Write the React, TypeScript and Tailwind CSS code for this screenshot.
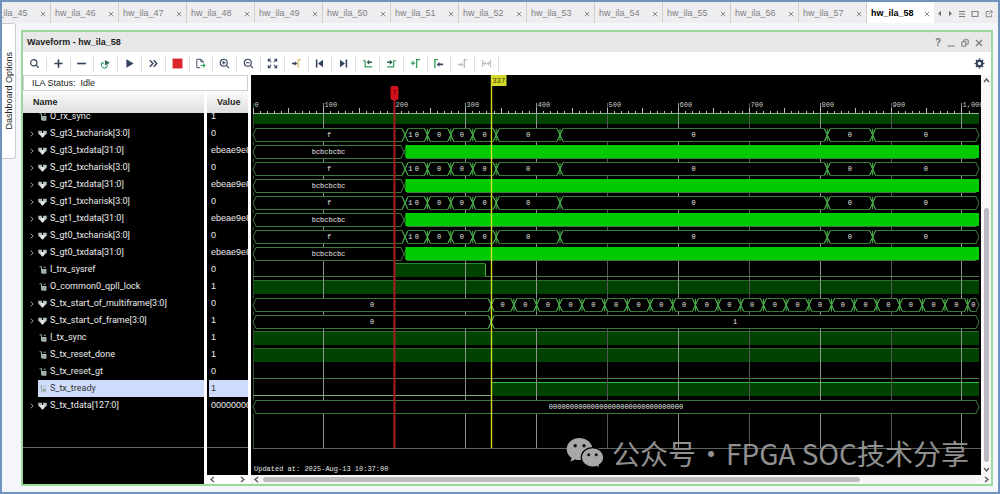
import React, { useLayoutEffect, useRef, useState } from 'react';

const NAVY = '#34435e';
const GREEN = '#2f9e5b';
const GREY = '#b9b9b9';

/* ---------- tab strip ---------- */

const tabNames = Array.from({ length: 14 }, (_, i) => `hw_ila_${45 + i}`);

function CloseGlyph() {
  return (
    <svg viewBox="0 0 6 6" className="size-[6px]" fill="none" stroke="#8a8a8a" strokeWidth="1">
      <path d="M.8 .8 5.2 5.2M5.2 .8 .8 5.2" />
    </svg>
  );
}

function TabStrip() {
  return (
    <header className="flex h-[21px] shrink-0 bg-[#eeeef1]">
      <div className="flex min-w-0 flex-1 justify-end overflow-hidden" role="tablist">
        {tabNames.map((name, i) => {
          const active = i === tabNames.length - 1;
          return (
            <div
              key={name}
              className={
                active
                  ? 'flex w-[68px] shrink-0 items-center justify-between border-l border-[#cfcfcf] bg-white pr-[4px] pl-[4px]'
                  : 'flex w-[68px] shrink-0 items-center justify-between border-l border-[#cfcfcf] pr-[4px] pl-[4px]'
              }
            >
              <button
                role="tab"
                aria-selected={active}
                className={active ? 'text-[9px] leading-[12px] font-bold text-black' : 'text-[9px] leading-[12px] text-[#808080]'}
              >
                {name}
              </button>
              <button aria-label={`Close ${name}`} className="pt-[2px]">
                <CloseGlyph />
              </button>
            </div>
          );
        })}
      </div>
      <div className="flex w-[64px] shrink-0 items-center justify-between pt-[2px] pr-[5px] pl-[3px]">
        <button aria-label="Previous tab">
          <svg viewBox="0 0 5 7" className="h-[7px] w-[5px]"><path d="M4 .8v5.4L1 3.5z" fill="#777" /></svg>
        </button>
        <button aria-label="Next tab">
          <svg viewBox="0 0 5 7" className="h-[7px] w-[5px]"><path d="M1 .8v5.4l3-2.7z" fill="#777" /></svg>
        </button>
        <button aria-label="Tab list">
          <svg viewBox="0 0 6 8" className="h-[8px] w-[6px]"><path d="M0 1.5h6M0 4h6M0 6.5h6" stroke="#777" /></svg>
        </button>
        <button aria-label="Maximize">
          <svg viewBox="0 0 8 8" className="size-[8px]"><path d="M1 1.5h6v5H1z" fill="none" stroke="#888" strokeWidth="1.2" /></svg>
        </button>
        <button aria-label="Float">
          <svg viewBox="0 0 8 8" className="size-[8px]" fill="none" stroke="#888"><path d="M4 1.5H1.2v5.3h5.4V4.2M4 4.2 7 1M4.8 1H7v2.2" /></svg>
        </button>
      </div>
    </header>
  );
}

/* ---------- toolbar ---------- */

const tools: { label: string; icon: React.ReactNode }[] = [
  { label: 'Search', icon: <g fill="none" stroke={NAVY} strokeWidth="1.3"><circle cx="5.2" cy="5.2" r="3.4" /><path d="m7.8 7.8 2.8 2.8" /></g> },
  { label: 'Add', icon: <path d="M6 1.5v9M1.5 6h9" stroke={NAVY} strokeWidth="1.8" /> },
  { label: 'Remove', icon: <path d="M1.2 6h9.6" stroke={NAVY} strokeWidth="1.8" /> },
  {
    label: 'Toggle auto re-trigger',
    icon: <g><path d="M2.6 5.2a3.3 3.3 0 1 0 5.6 2.4M1.3 6.3l1.5-1.5 1.5 1.3" fill="none" stroke={GREEN} strokeWidth="1.1" /><path d="m5.4 2.2 5.4 3.1-5.4 3.1z" fill="#2c6a5c" /></g>,
  },
  { label: 'Run trigger', icon: <path d="m2.6 1.4 8 4.6-8 4.600z" fill={NAVY} /> },
  { label: 'Run trigger immediate', icon: <path d="m2 2.4 3.4 3.6L2 9.6M6.2 2.4 9.6 6 6.2 9.6" fill="none" stroke={NAVY} strokeWidth="1.5" /> },
  { label: 'Stop trigger', icon: <path d="M.6 .6h10.8v10.8H.6z" fill="#d8242b" /> },
  {
    label: 'Export data',
    icon: <g fill="none"><path d="M9.2 4.8V3.9L6.6 1.4H2v9.2h3.8M6.4 1.6v2.6h2.8" stroke={NAVY} /><path d="M6.2 8.2h4.4M8.8 6.2l2 2-2 2" stroke={GREEN} strokeWidth="1.1" /></g>,
  },
  { label: 'Zoom in', icon: <g fill="none" stroke={NAVY} strokeWidth="1.2"><circle cx="5.2" cy="5.2" r="3.8" /><path d="m8 8 3 3M3.2 5.2h4M5.2 3.2v4" /></g> },
  { label: 'Zoom out', icon: <g fill="none" stroke={NAVY} strokeWidth="1.2"><circle cx="5.2" cy="5.2" r="3.8" /><path d="m8 8 3 3M3.2 5.2h4" /></g> },
  {
    label: 'Zoom fit',
    icon: <path d="M4.6 4.6 1.6 1.6M1.4 4V1.4H4M7.4 4.6l3-3M8 1.4h2.6V4M4.6 7.4l-3 3M1.4 8v2.6H4M7.4 7.4l3 3M8 10.6h2.6V8" fill="none" stroke={NAVY} strokeWidth="1.1" />,
  },
  {
    label: 'Go to cursor',
    icon: <g><path d="M1 6h3.6" stroke={NAVY} strokeWidth="1.8" /><path d="m4 3.6 3 2.4-3 2.4z" fill={NAVY} /><path d="M7.8 11V2H11" fill="none" stroke="#d9bd6a" strokeWidth="1.4" /></g>,
  },
  { label: 'Go to start', icon: <g fill={NAVY}><path d="M2 1.6h1.7v8.8H2z" /><path d="M9.8 1.8v8.4L4.4 6z" /></g> },
  { label: 'Go to end', icon: <g fill={NAVY}><path d="M8.3 1.6H10v8.8H8.3z" /><path d="M2.2 1.8v8.4L7.6 6z" /></g> },
  {
    label: 'Previous transition',
    icon: <g><path d="M1 3h2.4v6.6H11" fill="none" stroke={GREEN} strokeWidth="1.3" /><path d="M5 4.6 8 2v1.8h2.8v1.7H8v1.8z" fill="#24594d" /></g>,
  },
  {
    label: 'Next transition',
    icon: <g><path d="M1 9.6h7.4V3H11" fill="none" stroke={GREEN} strokeWidth="1.3" /><path d="M7.2 4.6 4.2 2v1.8H1.2v1.7h3v1.8z" fill="#24594d" /></g>,
  },
  { label: 'Add marker', icon: <g fill="none" stroke={GREEN}><path d="M1 5.6h4.4M3.2 3.4v4.4" strokeWidth="1.3" /><path d="M7.2 11V1.8H11" strokeWidth="1.5" /></g> },
  {
    label: 'Previous marker',
    icon: <g><path d="M2 11V1.8h3.4" fill="none" stroke={GREEN} strokeWidth="1.5" /><path d="m4 7 3-2.6v1.7h4v1.9H7v1.6z" fill={NAVY} /></g>,
  },
  {
    label: 'Next marker',
    icon: <g><path d="M8 11V1.8h3" fill="none" stroke={GREY} strokeWidth="1.4" /><path d="M7 7 4.4 4.8v1.4H1.2v1.7h3.2v1.3z" fill={GREY} /></g>,
  },
  { label: 'Swap cursors', icon: <path d="M1.5 1.8v8.4M10.5 1.8v8.4M2 6h2.4M7.6 6H10M3 3.8 5.2 6 3 8.2M9 3.8 6.8 6 9 8.2" fill="none" stroke={GREY} strokeWidth="1.1" /> },
];

function Toolbar() {
  return (
    <div className="flex h-[23px] items-center justify-between bg-white pr-[6px]">
      <div className="flex w-[476px] shrink-0" role="toolbar" aria-label="Waveform tools">
        {tools.map((t) => (
          <button key={t.label} aria-label={t.label} className="flex h-[14px] flex-1 items-center justify-center border-r border-[#dcdcdc]">
            <svg viewBox="0 0 12 12" className="size-[11px]">{t.icon}</svg>
          </button>
        ))}
      </div>
      <button aria-label="Settings">
        <svg viewBox="0 0 12 12" className="size-[11px]">
          <circle cx="6" cy="6" r="2.9" fill="none" stroke={NAVY} strokeWidth="2.2" />
          <path d="M6 .6v2M6 9.4v2M.6 6h2M9.4 6h2M2.2 2.2l1.4 1.4M8.4 8.4l1.4 1.4M9.8 2.2 8.4 3.6M3.6 8.4 2.2 9.8" stroke={NAVY} strokeWidth="1.8" />
        </svg>
      </button>
    </div>
  );
}

/* ---------- signal table ---------- */

type Signal = { name: string; value: string; bus?: boolean; selected?: boolean };

const signals: Signal[] = [
  { name: 'O_rx_sync', value: '1' },
  { name: 'S_gt3_txcharisk[3:0]', value: '0', bus: true },
  { name: 'S_gt3_txdata[31:0]', value: 'ebeae9e8', bus: true },
  { name: 'S_gt2_txcharisk[3:0]', value: '0', bus: true },
  { name: 'S_gt2_txdata[31:0]', value: 'ebeae9e8', bus: true },
  { name: 'S_gt1_txcharisk[3:0]', value: '0', bus: true },
  { name: 'S_gt1_txdata[31:0]', value: 'ebeae9e8', bus: true },
  { name: 'S_gt0_txcharisk[3:0]', value: '0', bus: true },
  { name: 'S_gt0_txdata[31:0]', value: 'ebeae9e8', bus: true },
  { name: 'I_trx_sysref', value: '0' },
  { name: 'O_common0_qpll_lock', value: '1' },
  { name: 'S_tx_start_of_multiframe[3:0]', value: '0', bus: true },
  { name: 'S_tx_start_of_frame[3:0]', value: '1', bus: true },
  { name: 'I_tx_sync', value: '1' },
  { name: 'S_tx_reset_done', value: '1' },
  { name: 'S_tx_reset_gt', value: '0' },
  { name: 'S_tx_tready', value: '1', selected: true },
  { name: 'S_tx_tdata[127:0]', value: '00000000', bus: true },
];

function BusIcon() {
  return (
    <svg viewBox="0 0 9 8" className="h-[8px] w-[9px] shrink-0">
      <path d="M.3 .8h3.6v3.400L2.600 5.400.3 3.900zM5.100.8h3.600v3.100L6.400 5.400 5.100 4.200z" fill="#b8c4c4" />
      <path d="M2.600 3h3.800v3L4.500 7.800 2.600 6z" fill="#e6eaea" />
    </svg>
  );
}

function WireIcon() {
  return (
    <svg viewBox="0 0 9 8" className="h-[8px] w-[9px] shrink-0" fill="none">
      <path d="M1.500.8h2v6.400M5.600 1.200h2.200" stroke="#8fb0aa" />
      <rect x="4.600" y="3.400" width="3.400" height="3.800" fill="#93a6a4" stroke="#c6d0cf" strokeWidth=".8" />
    </svg>
  );
}

function SignalTable() {
  return (
    <table className="w-full table-fixed border-separate border-spacing-0 text-left text-[9px] leading-[11px] text-[#ececec]">
      <colgroup>
        <col />
        <col className="w-[41px]" />
      </colgroup>
      <thead>
        <tr className="text-[#222]">
          <th className="h-[21px] border-r-3 border-white bg-linear-to-b from-[#fafafa] to-[#dedede] p-0 pl-[10px] font-bold">Name</th>
          <th className="h-[21px] bg-linear-to-b from-[#fafafa] to-[#dedede] p-0 pl-[10px] font-bold">Value</th>
        </tr>
      </thead>
      <tbody className="bg-black">
        {signals.map((s, i) => (
          <tr key={s.name}>
            <td className="border-r-3 border-white p-0 font-['Roboto','Liberation_Sans',sans-serif]">
              <div className={i === 0 ? 'flex h-[12px] items-end overflow-hidden' : 'flex h-[17px]'}>
                <div className="flex h-[17px] w-[15px] shrink-0 items-center pl-[7px]">
                  {s.bus && (
                    <svg viewBox="0 0 4 6" className="h-[6px] w-[4px]"><path d="M.7.7 3.2 3 .7 5.3" fill="none" stroke="#999" /></svg>
                  )}
                </div>
                <div className={s.selected ? 'flex h-[17px] flex-1 items-center gap-[3px] bg-[#cfdbfb] text-[#333]' : 'flex h-[17px] flex-1 items-center gap-[3px]'}>
                  {s.bus ? <BusIcon /> : <WireIcon />}
                  <span className="whitespace-nowrap">{s.name}</span>
                </div>
              </div>
            </td>
            <td className="p-0 pl-[2px]">
              <div className={i === 0 ? 'flex h-[12px] items-end overflow-hidden' : 'flex h-[17px] overflow-hidden'}>
                <div className={s.selected ? 'flex h-[17px] flex-1 items-center bg-[#cfdbfb] pl-[2px] text-[#333]' : 'flex h-[17px] flex-1 items-center pl-[2px]'}>
                  {s.value}
                </div>
              </div>
            </td>
          </tr>
        ))}
        <tr>
          <td className="border-r-3 border-r-white p-0"><div className="h-[34px] border-b border-[#666]" /></td>
          <td className="p-0"><div className="h-[34px] border-b border-[#666]" /></td>
        </tr>
        <tr>
          <td className="h-[27px] border-r-3 border-white p-0" />
          <td className="h-[27px] p-0" />
        </tr>
        <tr>
          <td className="h-[9px] border-r-3 border-white p-0" />
          <td className="h-[9px] bg-white p-0">
            <div className="flex h-[9px] items-center justify-between px-[2px]">
              <Arrow dir="left" />
              <Arrow dir="right" />
            </div>
          </td>
        </tr>
      </tbody>
    </table>
  );
}

function Arrow({ dir }: { dir: 'left' | 'right' | 'up' | 'down' }) {
  const d = { left: 'M5 1 2 3.5 5 6', right: 'M2 1l3 2.5L2 6', up: 'M1 5l2.5-3L6 5', down: 'M1 2l2.5 3L6 2' }[dir];
  return (
    <button aria-label={`Scroll ${dir}`} className="shrink-0">
      <svg viewBox="0 0 7 7" className="size-[7px]"><path d={d} fill="none" stroke="#555" strokeWidth="1.3" /></svg>
    </button>
  );
}

/* ---------- waveform ---------- */

const SAMPLES = 1024;
const X0 = 2;
const FIRST_ROW = 41;
const ROW = 17;
const LINE = '#3c7a3c';
const rowY = (i: number) => FIRST_ROW + i * ROW;

type Px = (sample: number) => number;

function Bus({ row, edges, labels, px, light }: { row: number; edges: number[]; labels: string[]; px: Px; light?: boolean }) {
  const t = rowY(row) - 4.5;
  const b = rowY(row) + 8.5;
  const m = (t + b) / 2;
  return (
    <g>
      {edges.slice(0, -1).map((e, i) => {
        const x1 = px(e);
        const x2 = px(edges[i + 1]);
        return (
          <g key={e}>
            <rect x={x1} y={t} width={x2 - x1} height={b - t} fill="#000" />
            <path d={`M${x1} ${m}L${x1 + 3} ${t}H${x2 - 3}L${x2} ${m}L${x2 - 3} ${b}H${x1 + 3}Z`} fill="#000" stroke={LINE} />
            <text x={(x1 + x2) / 2} y={rowY(row) + 4} textAnchor="middle">{labels[i]}</text>
          </g>
        );
      })}
      {!light &&
        edges.slice(1, -1).map((e, i) => {
          const x = px(e);
          return (
            <path
              key={e}
              d={`M${x - 3} ${t}L${x + 3} ${b}M${x + 3} ${t}L${x - 3} ${b}${i > 0 || edges.length > 12 ? `M${x} ${t}V${b}` : ''}`}
              stroke="#48b04c"
              fill="none"
            />
          );
        })}
    </g>
  );
}

function High({ row, from, to, px, line }: { row: number; from: number; to: number; px: Px; line?: string }) {
  const y = rowY(row) - 5;
  return (
    <g>
      <rect x={px(from)} y={y} width={px(to) - px(from)} height="13" fill="#004200" />
      <path d={`M${px(from)} ${y - 0.5}H${px(to)}`} stroke={line ?? '#2f6b2f'} />
    </g>
  );
}

function Low({ row, from, to, px, color }: { row: number; from: number; to: number; px: Px; color?: string }) {
  return <path d={`M${px(from)} ${rowY(row) + 7.5}H${px(to)}`} stroke={color ?? '#4c7a4c'} />;
}

const kEdges = [0, 214.5, 246, 279, 310, 343, 433, 810, 874, SAMPLES];
const kLabels = ['f', '', '0', '0', '0', '0', '0', '0', '0'];
const frameEdges = [0, ...Array.from({ length: 22 }, (_, i) => 336 + 32 * i), SAMPLES];

function Waveform() {
  const ref = useRef<HTMLDivElement>(null);
  const [w, setW] = useState(730);
  useLayoutEffect(() => {
    const el = ref.current;
    if (!el) return;
    const measure = () => setW(el.clientWidth);
    measure();
    const ro = new ResizeObserver(measure);
    ro.observe(el);
    return () => ro.disconnect();
  }, []);
  const px: Px = (s) => X0 + (s * (w - 4)) / SAMPLES;
  const snap: Px = (s) => Math.floor(px(s)) + 0.5;
  const end = px(SAMPLES);

  return (
    <div ref={ref} className="h-[400px] w-full overflow-hidden bg-black">
      <svg width={w} height="400" className="block font-['Liberation_Mono',monospace] text-[7px]" fill="#e6e6e6" strokeWidth="1">
        <High row={0} from={0} to={SAMPLES} px={px} />
        <rect x="0" y="0" width={w} height="38" fill="#000" />
        <High row={10} from={0} to={SAMPLES} px={px} />
        <High row={13} from={0} to={SAMPLES} px={px} />
        <High row={14} from={0} to={SAMPLES} px={px} />
        <High row={9} from={200} to={328} px={px} line="#2c8a2c" />
        <High row={16} from={336} to={SAMPLES} px={px} line="#35c335" />

        {Array.from({ length: 11 }, (_, i) => i * 100).map((s) => (
          <g key={s}>
            <path d={`M${snap(s)} 28V373`} stroke={s === 0 ? '#2c4a2c' : s >= 500 && s % 200 === 100 ? '#555' : '#8d938d'} />
            <text x={snap(s) + 1} y="32" fill="#c8c8c8">{s === 1000 ? '1,000' : s}</text>
          </g>
        ))}
        {Array.from({ length: 102 }, (_, i) => i * 10).map((s) => (
          <path key={s} d={`M${snap(s)} ${s % 50 === 0 ? 33 : 36}V39`} stroke="#b8bdb8" />
        ))}
        <path d={`M${X0} 38.5H${end}`} stroke="#8fb88f" />

        {[1, 3, 5, 7].map((r) => (
          <g key={r}>
            <Bus row={r} edges={kEdges} labels={kLabels} px={px} />
            <text x={px(222)} y={rowY(r) + 4} textAnchor="middle">1</text>
            <text x={px(231)} y={rowY(r) + 4} textAnchor="middle">0</text>
          </g>
        ))}
        {[2, 4, 6, 8].map((r) => (
          <g key={r}>
            <Bus row={r} edges={[0, 213, SAMPLES]} labels={['bcbcbcbc', '']} px={px} light />
            <rect x={px(215)} y={rowY(r) - 5} width={end - px(215)} height="13" fill="#00cb00" />
          </g>
        ))}
        <Low row={9} from={0} to={200} px={px} />
        <path d={`M${px(328)} ${rowY(9) - 5}v13`} stroke="#5fae3f" />
        <Low row={9} from={328} to={SAMPLES} px={px} />
        <Bus row={11} edges={frameEdges} labels={frameEdges.map(() => '0')} px={px} />
        <Bus row={12} edges={[0, 336, SAMPLES]} labels={['0', '1']} px={px} />
        <Low row={15} from={0} to={SAMPLES} px={px} />
        <Low row={16} from={0} to={336} px={px} color="#7fae6a" />
        <Bus row={17} edges={[0, SAMPLES]} labels={['0'.repeat(32)]} px={px} />
        <path d={`M${X0} 373.5H${w}`} stroke="#5c625c" />

        <path d={`M${snap(200)} 24V373`} stroke="#a81c24" strokeWidth="2" />
        <rect x={snap(200) - 4} y="11" width="8" height="14" rx="2" fill="#d0101c" />
        <text x={snap(200)} y="20" textAnchor="middle" fill="#6a0008">T</text>
        <path d={`M${snap(336)} 0V373`} stroke="#d3dc28" strokeWidth="1.4" />
        <rect x={snap(336)} y="0" width="15" height="11" fill="#d6d92c" />
        <text x={snap(336) + 1} y="8" fill="#3c3c00">337</text>
        <text x="3" y="396">Updated at: 2025-Aug-13 10:37:00</text>
      </svg>
    </div>
  );
}

function Watermark() {
  return (
    <div className="pointer-events-none absolute right-[12px] bottom-[11px] flex items-center text-[28px] leading-[40px] font-normal whitespace-nowrap text-[#909090] font-['Noto_Sans_CJK_SC',sans-serif]">
      <svg viewBox="0 0 38 32" className="mr-[8px] h-[32px] w-[38px]">
        <path d="M13.5 1C6.300 1 .7 5.900 .7 12.200c0 3.600 1.900 6.700 4.900 8.800L4.400 24.700l4.500-2.300c1.500.4 3 .7 4.600.7 7.200 0 12.900-4.900 12.900-11S20.700 1 13.500 1z" fill="#a8a8a8" />
        <path d="M26.500 10.700c-6.200 0-11.200 4.300-11.200 9.700s5 9.700 11.200 9.700c1.400 0 2.700-.2 3.900-.6l3.600 1.900-.9-3.200c2.800-1.800 4.600-4.600 4.600-7.800 0-5.400-5-9.700-11.200-9.700z" fill="#a8a8a8" stroke="#000" strokeWidth="1.2" />
        <g fill="#111">
          <circle cx="9.200" cy="8.800" r="1.700" />
          <circle cx="18" cy="8.800" r="1.700" />
          <circle cx="22.700" cy="17.800" r="1.500" />
          <circle cx="30.200" cy="17.800" r="1.500" />
        </g>
      </svg>
      <span>公众号</span>
      <span className="mx-px">·</span>
      <span>FPGA SOC技术分享</span>
    </div>
  );
}

/* ---------- page ---------- */

export default function App() {
  return (
    <div className="flex min-h-screen flex-col border-2 border-[#6f93bd] bg-[#f5f6fb] font-['Liberation_Sans',Arial,sans-serif] text-[#222]">
      <TabStrip />
      <div className="flex flex-1 items-start pr-[5px] pb-[5px]">
        <aside className="w-[19px] shrink-0">
          <button className="flex h-[136px] w-[14px] items-center justify-center rounded-r-[3px] border border-l-0 border-[#c9ccd6] bg-white text-[9px] leading-[12px]">
            <span className="rotate-180 whitespace-nowrap [writing-mode:vertical-rl]">Dashboard Options</span>
          </button>
        </aside>
        <main className="mt-[7px] min-w-0 flex-1 border-2 border-[#9bd89b] bg-white">
          <div className="flex h-[20px] items-center justify-between bg-[#e8e8e8] pr-[8px] pl-[4px]">
            <h1 className="text-[9px] leading-[12px] font-bold">Waveform - hw_ila_58</h1>
            <div className="flex items-center gap-[6px] pt-[1px] text-[#777]">
              <button aria-label="Help" className="text-[10px] leading-[12px] font-bold">?</button>
              <button aria-label="Minimize"><svg viewBox="0 0 8 8" className="size-[8px]"><path d="M.5 7h7" stroke="currentColor" /></svg></button>
              <button aria-label="Restore"><svg viewBox="0 0 8 8" className="size-[8px]" fill="none" stroke="currentColor"><path d="M.8 2.800h4v4.400h-4zM2.800 2.800V.8h4.400v4.400H4.800" /></svg></button>
              <button aria-label="Close"><svg viewBox="0 0 8 8" className="size-[8px]"><path d="M1 1l6 6M7 1 1 7" stroke="currentColor" strokeWidth="1.2" /></svg></button>
            </div>
          </div>
          <Toolbar />
          <div className="flex">
            <section className="mr-[3px] w-[225px] shrink-0">
              <div className="mb-px flex h-[16px] items-center border border-[#cfcfcf] bg-white pl-[8px] text-[9px] leading-[12px]">ILA Status: &nbsp;Idle</div>
              <SignalTable />
            </section>
            <section className="relative min-w-0 flex-1">
              <Waveform />
              <Watermark />
              <div className="flex h-[9px] items-center bg-[#f6f6f6] pl-[2px]">
                <Arrow dir="left" />
                <div className="ml-[3px] h-[5px] w-[82%] rounded-full bg-[#bdbdbd]" />
              </div>
            </section>
            <div className="flex w-[10px] shrink-0 flex-col items-center bg-[#f8f8f8] pt-[2px]">
              <Arrow dir="up" />
              <div className="mt-auto h-[254px] w-[5px] rounded-full bg-[#bcbac0]" />
              <div className="mt-[4px] flex flex-col gap-[3px] pb-px">
                <Arrow dir="down" />
                <Arrow dir="right" />
              </div>
            </div>
          </div>
        </main>
      </div>
    </div>
  );
}
